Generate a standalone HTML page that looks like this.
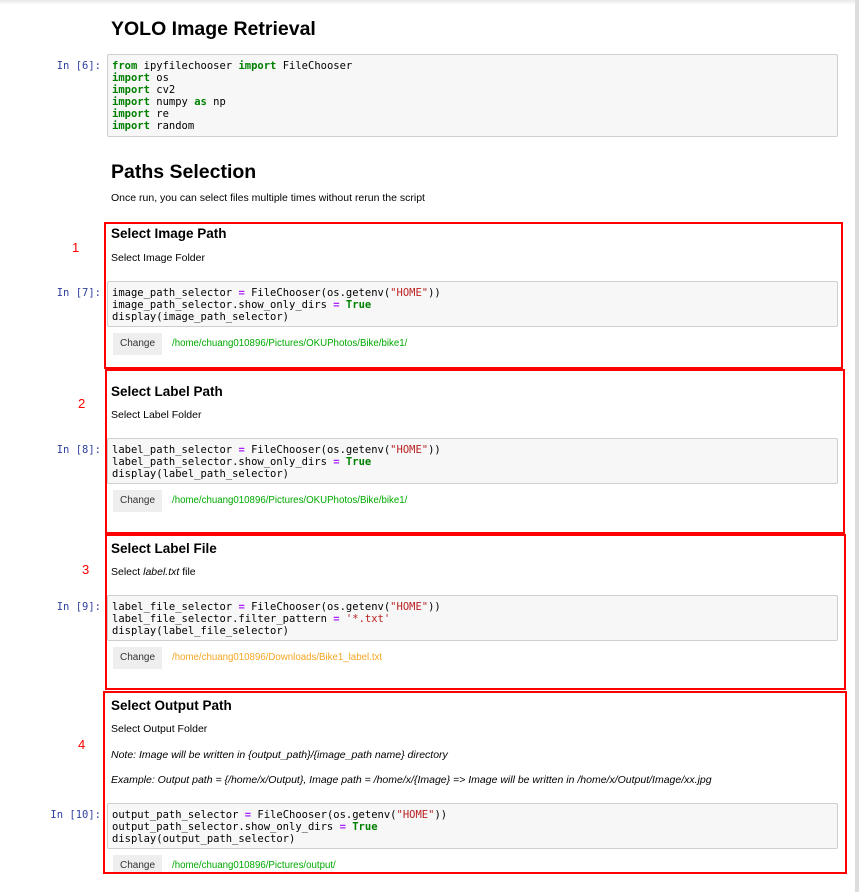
<!DOCTYPE html>
<html><head><meta charset="utf-8"><style>
body{margin:0;width:859px;height:892px;background:#fff;position:relative;overflow:hidden;font-family:"Liberation Sans",sans-serif;color:#000}
.a{position:absolute;white-space:pre}
.top{position:absolute;left:0;top:0;width:859px;height:5px;background:linear-gradient(#e8e8e8,#fff)}
.rb{position:absolute;left:855px;top:0;width:4px;height:892px;background:#ddd}
.h1{font-size:19.5px;font-weight:bold}
.h3{font-size:13.5px;font-weight:bold}
.p{font-size:10.5px}
.code{position:absolute;left:107px;width:731px;background:#f7f7f7;border:1px solid #cfcfcf;border-radius:2px;font-family:"DejaVu Sans Mono",monospace;font-size:10.5px;line-height:12px;padding:5px 0 0 4px;box-sizing:border-box;white-space:pre;color:#000}
.pr{position:absolute;font-family:"DejaVu Sans Mono",monospace;font-size:10.5px;color:#303f9f;text-align:right;width:60px}
.k{color:#008000;font-weight:bold}.o{color:#aa22ff;font-weight:bold}.s{color:#ba2121}
.btn{position:absolute;left:113px;width:49px;height:22px;background:#eee;font-size:10px;color:#333;text-align:center;line-height:22px}
.path{position:absolute;left:172px;font-size:9.7px;color:#0a0}
.box{position:absolute;border:2px solid #f00;box-sizing:border-box}
.n{position:absolute;color:#f00;font-size:13px}
</style></head><body>
<div class="top"></div><div class="rb"></div>
<div class="a h1" style="left:111px;top:18px">YOLO Image Retrieval</div>
<div class="pr" style="left:41px;top:60px">In [6]:</div>
<div class="code" style="top:54px;height:83px"><span class="k">from</span> ipyfilechooser <span class="k">import</span> FileChooser
<span class="k">import</span> os
<span class="k">import</span> cv2
<span class="k">import</span> numpy <span class="k">as</span> np
<span class="k">import</span> re
<span class="k">import</span> random</div>
<div class="a h1" style="left:111px;top:161px">Paths Selection</div>
<div class="a p" style="left:111px;top:192px">Once run, you can select files multiple times without rerun the script</div>

<div class="box" style="left:104px;top:222px;width:739px;height:147px"></div>
<div class="n" style="left:72px;top:240px">1</div>
<div class="a h3" style="left:111px;top:226px">Select Image Path</div>
<div class="a p" style="left:111px;top:252px">Select Image Folder</div>
<div class="pr" style="left:41px;top:287px">In [7]:</div>
<div class="code" style="top:281px;height:46px">image_path_selector <span class="o">=</span> FileChooser(os.getenv(<span class="s">"HOME"</span>))
image_path_selector.show_only_dirs <span class="o">=</span> <span class="k">True</span>
display(image_path_selector)</div>
<div class="btn" style="top:333px">Change</div>
<div class="path" style="top:338px">/home/chuang010896/Pictures/OKUPhotos/Bike/bike1/</div>

<div class="box" style="left:105px;top:369px;width:740px;height:165px"></div>
<div class="n" style="left:78px;top:396px">2</div>
<div class="a h3" style="left:111px;top:384px">Select Label Path</div>
<div class="a p" style="left:111px;top:409px">Select Label Folder</div>
<div class="pr" style="left:41px;top:444px">In [8]:</div>
<div class="code" style="top:438px;height:46px">label_path_selector <span class="o">=</span> FileChooser(os.getenv(<span class="s">"HOME"</span>))
label_path_selector.show_only_dirs <span class="o">=</span> <span class="k">True</span>
display(label_path_selector)</div>
<div class="btn" style="top:490px">Change</div>
<div class="path" style="top:495px">/home/chuang010896/Pictures/OKUPhotos/Bike/bike1/</div>

<div class="box" style="left:105px;top:534px;width:741px;height:156px"></div>
<div class="n" style="left:82px;top:562px">3</div>
<div class="a h3" style="left:111px;top:541px">Select Label File</div>
<div class="a p" style="left:111px;top:566px">Select <i>label.txt</i> file</div>
<div class="pr" style="left:41px;top:601px">In [9]:</div>
<div class="code" style="top:595px;height:46px">label_file_selector <span class="o">=</span> FileChooser(os.getenv(<span class="s">"HOME"</span>))
label_file_selector.filter_pattern <span class="o">=</span> <span class="s">'*.txt'</span>
display(label_file_selector)</div>
<div class="btn" style="top:647px">Change</div>
<div class="path" style="top:652px;color:#f5a623">/home/chuang010896/Downloads/Bike1_label.txt</div>

<div class="box" style="left:103px;top:691px;width:744px;height:183px"></div>
<div class="n" style="left:78px;top:737px">4</div>
<div class="a h3" style="left:111px;top:698px">Select Output Path</div>
<div class="a p" style="left:111px;top:723px">Select Output Folder</div>
<div class="a p" style="left:111px;top:749px"><i>Note: Image will be written in {output_path}/{image_path name} directory</i></div>
<div class="a p" style="left:111px;top:774px"><i>Example: Output path = {/home/x/Output}, Image path = /home/x/{Image} =&gt; Image will be written in /home/x/Output/Image/xx.jpg</i></div>
<div class="pr" style="left:41px;top:809px">In [10]:</div>
<div class="code" style="top:803px;height:46px">output_path_selector <span class="o">=</span> FileChooser(os.getenv(<span class="s">"HOME"</span>))
output_path_selector.show_only_dirs <span class="o">=</span> <span class="k">True</span>
display(output_path_selector)</div>
<div class="btn" style="top:855px;height:17px;line-height:22px">Change</div>
<div class="path" style="top:860px">/home/chuang010896/Pictures/output/</div>
</body></html>
